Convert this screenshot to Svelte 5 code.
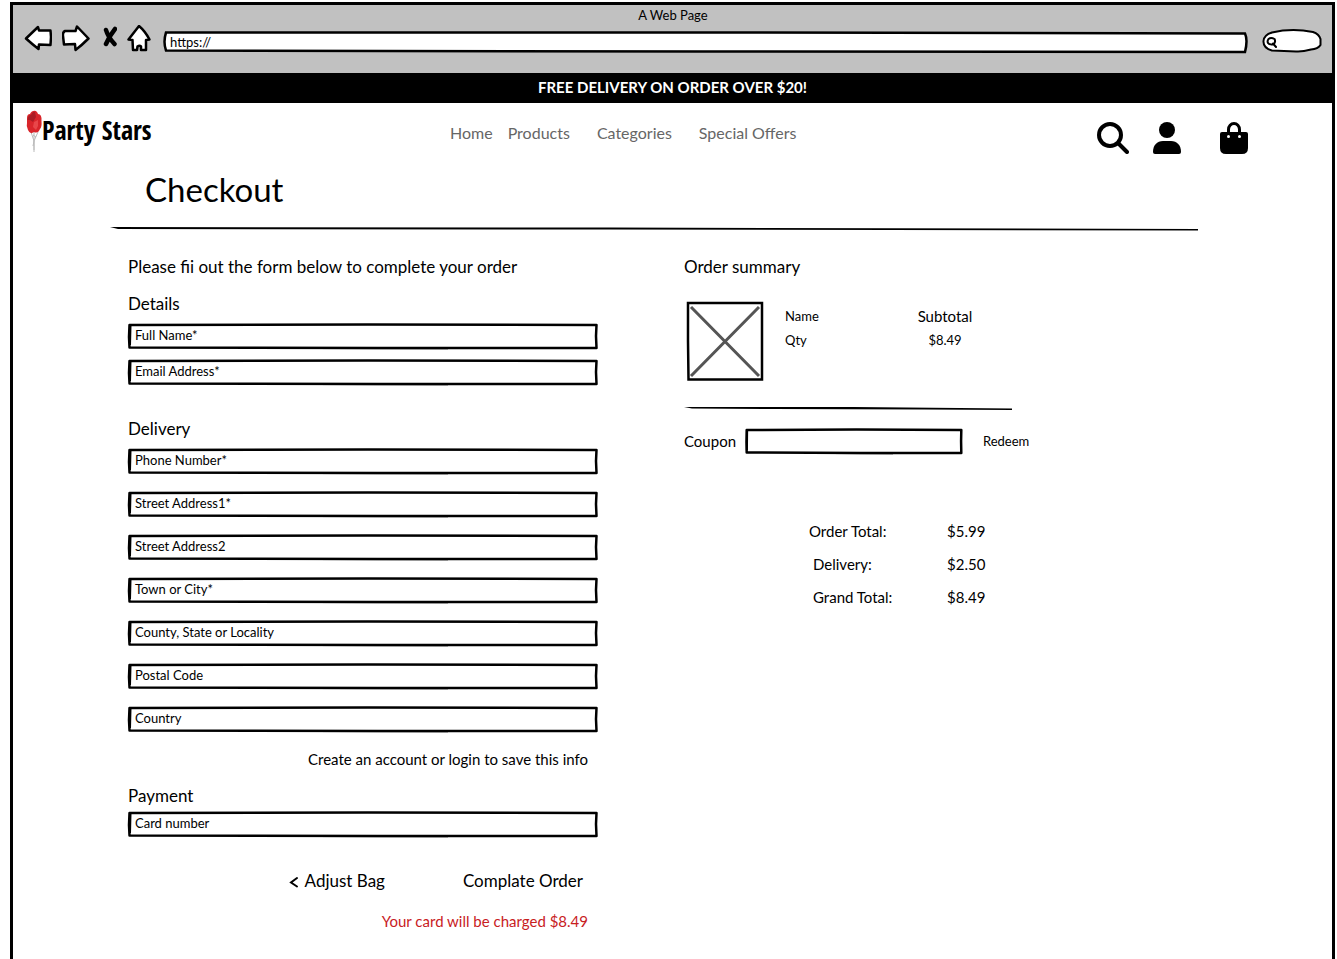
<script>
  const links = ['Home', 'Products', 'Categories', 'Special Offers'];
  const sections = [
    {
      title: 'Details',
      kind: 'details',
      fields: [
        { id: 'full-name', label: 'Full Name*' },
        { id: 'email', label: 'Email Address*' }
      ]
    },
    {
      title: 'Delivery',
      kind: 'delivery',
      fields: [
        { id: 'phone', label: 'Phone Number*' },
        { id: 'street-1', label: 'Street Address1*' },
        { id: 'street-2', label: 'Street Address2' },
        { id: 'town', label: 'Town or City*' },
        { id: 'county', label: 'County, State or Locality' },
        { id: 'postcode', label: 'Postal Code' },
        { id: 'country', label: 'Country' }
      ]
    }
  ];
  const totals = [
    ['Order Total:', '$5.99'],
    ['Delivery:', '$2.50'],
    ['Grand Total:', '$8.49']
  ];
</script>

{#snippet frame()}
  <svg class="frame" viewBox="0 0 470 26" preserveAspectRatio="none" aria-hidden="true">
    <path d="M1.500 2 L1 14 L1.500 24.500 L250 25 L468.500 25 L468 13 L468.500 2 L240 1.500Z" fill="none" stroke="#000" stroke-width="2.500" stroke-linejoin="round" vector-effect="non-scaling-stroke" />
    <path d="M2.500 3 L2 22 M180 25 L320 25.300" fill="none" stroke="#000" stroke-width="2" vector-effect="non-scaling-stroke" />
  </svg>
{/snippet}

{#snippet field(f)}
  <div class="field">
    {@render frame()}
    <div class="field-body">
      <label for={f.id}>{f.label}</label>
      <input id={f.id} type="text" />
    </div>
  </div>
{/snippet}

<div class="browser">
  <div class="chrome">
    <div class="title">A Web Page</div>
    <div class="toolbar">
      <button aria-label="Back">
        <svg width="28" height="28" viewBox="0 0 28 28"><path d="M2 13.500 L14 2 L15 5.500 L26.500 5.500 L27 12 L26.500 20 L15 19.500 L14.500 24 Q8 19 2 13.500Z" class="ink" /></svg>
      </button>
      <button aria-label="Forward">
        <svg width="28" height="28" viewBox="0 0 28 28"><path d="M26.500 13.500 L15 1.500 L13.500 6 L3 6 Q0.500 7 1 11 L2 19.500 L13 19 L13.500 25 Q20 20 26.500 13.500Z" class="ink" /></svg>
      </button>
      <button aria-label="Stop">
        <svg width="17" height="28" viewBox="0 0 17 28"><path d="M6 5 Q8 12 14.500 19 M15 4 Q10 10 6 19" fill="none" stroke="#000" stroke-width="4.500" stroke-linecap="round" /></svg>
      </button>
      <button aria-label="Home page">
        <svg width="24" height="28" viewBox="0 0 24 28"><path d="M12 1 L1.500 14.500 L5.500 15 L6 25 L10 25 L10.500 21.500 Q12.500 20 14 21.500 L14 25 L19 25 L19 15 L22.500 14.500 Q18 6 12 1Z" class="ink" /></svg>
      </button>
      <div class="address">
        <svg class="frame" viewBox="0 0 1085 22" preserveAspectRatio="none" aria-hidden="true">
          <path d="M3 1.500 L540 1.500 L1082 2.500 Q1085 9 1082 21 L540 20.500 L3 19.500 Q0 11 3 1.500Z" fill="#fff" stroke="#000" stroke-width="2.500" vector-effect="non-scaling-stroke" />
        </svg>
        <input type="text" value="https://" aria-label="Address" />
      </div>
      <button aria-label="Find">
        <svg width="60" height="24" viewBox="0 0 60 24">
          <path d="M10 3.500 Q30 -1 51 3 Q57 5 58.500 10 L58.500 16 Q56 20 49 20.500 Q40 23 34 22.500 L10 21.500 Q1 19 1.500 12 Q2 6 10 3.500Z" class="ink thin" />
          <path d="M6.500 10 Q9 8 12.500 10 Q14 13 11.500 15.500 Q7 16 6 14 Q5 12 6.500 10Z M11 14.500 L14 18" fill="none" stroke="#000" stroke-width="2" stroke-linecap="round" />
        </svg>
      </button>
    </div>
  </div>

  <p class="banner">FREE DELIVERY ON ORDER OVER $20!</p>

  <header>
    <a class="logo" href="#home">
      <svg width="16" height="44" viewBox="0 0 16 44" aria-hidden="true">
        <path d="M5 22 L8 31 L8 42 M12 22 L8 31 L7 36 M8 22 L8 40 M7 25 L10 27" fill="none" stroke="#bbb" stroke-width="1" />
        <path d="M1 8 Q1 4 4 4 Q6 0 10 1 Q12 3 12 4 Q16 4 15.500 11 Q16 17 14 19 Q12 24 8 22 Q4 25 2 20 Q0 16 1 13Z" fill="#d9252b" />
        <path d="M1.500 10 Q2 5 5 5 Q7 1 9 2 L10 7 L7 12 L4 10Z" fill="#ab1c24" />
        <path d="M8 12 L12 10 L12 16 L10 20 L7 17Z" fill="#e8474a" />
      </svg>
      <span>Party Stars</span>
    </a>
    <nav>
      {#each links as link}
        <a href="#{link.toLowerCase().replace(' ', '-')}">{link}</a>
      {/each}
    </nav>
    <div class="tools">
      <button aria-label="Search">
        <svg width="32" height="32" viewBox="0 0 32 32"><circle cx="13" cy="13" r="11" fill="none" stroke="#000" stroke-width="4" /><path d="M21.500 21.500 L30 30" stroke="#000" stroke-width="4" stroke-linecap="round" /></svg>
      </button>
      <button aria-label="Account">
        <svg width="28" height="32" viewBox="0 0 28 32"><circle cx="14" cy="8" r="8" /><path d="M0 30 C0 23 4 19 10 19 H18 C24 19 28 23 28 30 Q28 32 26 32 H2 Q0 32 0 30Z" /></svg>
      </button>
      <button class="bag" aria-label="Bag">
        <svg width="28" height="32" viewBox="0 0 28 32"><path d="M8.500 13 V7.500 A5.500 6 0 0 1 19.500 7.500 V13" fill="none" stroke="#000" stroke-width="3" /><path d="M2 10 H26 Q28 10 28 12 V26 Q28 32 22 32 H6 Q0 32 0 26 V12 Q0 10 2 10Z" /><circle cx="8.500" cy="14.500" r="1.500" fill="#fff" /><circle cx="19.500" cy="14.500" r="1.500" fill="#fff" /></svg>
      </button>
    </div>
  </header>

  <main>
    <h1>Checkout</h1>
    <svg class="rule" viewBox="0 0 1088 5" preserveAspectRatio="none" aria-hidden="true"><path d="M0 1 L500 1.500 L1088 3 L1088 4.500 L500 3.500 L8 3Z" /></svg>

    <div class="columns">
      <form onsubmit={(e) => e.preventDefault()}>
        <p>Please fii out the form below to complete your order</p>
        {#each sections as section}
          <section class={section.kind}>
            <h2>{section.title}</h2>
            <div class="fields">
              {#each section.fields as f}
                {@render field(f)}
              {/each}
            </div>
          </section>
        {/each}
        <a class="account" href="#login">Create an account or login to save this info</a>
        <section class="payment">
          <h2>Payment</h2>
          {@render field({ id: 'card', label: 'Card number' })}
        </section>
        <div class="actions">
          <button type="button">
            <svg width="10" height="14" viewBox="0 0 10 14" aria-hidden="true"><path d="M8 4 L2 8.500 L8 12.500" fill="none" stroke="#000" stroke-width="2" stroke-linecap="round" /></svg>
            Adjust Bag
          </button>
          <button type="submit">Complate Order</button>
        </div>
        <p class="charge">Your card will be charged $8.49</p>
      </form>

      <aside>
        <h2>Order summary</h2>
        <div class="product">
          <svg width="78" height="80" viewBox="0 0 78 80" aria-hidden="true">
            <path d="M5 6 L73 75 M73 6 L5 75" stroke="#555" stroke-width="3" />
            <path d="M2 2 H76 V78.500 H2.500 L2 40Z" fill="none" stroke="#000" stroke-width="2.500" />
          </svg>
          <div class="item"><span>Name</span><span>Qty</span></div>
          <div class="price"><span>Subtotal</span><small>$8.49</small></div>
        </div>
        <svg class="rule short" viewBox="0 0 328 5" preserveAspectRatio="none" aria-hidden="true"><path d="M0 1 L170 1 L328 2.500 L328 4 L240 3.500 L90 3 L8 2.500Z" /></svg>
        <div class="coupon">
          <label for="coupon">Coupon</label>
          <div class="field">
            {@render frame()}
            <div class="field-body"><input id="coupon" type="text" /></div>
          </div>
          <button type="button">Redeem</button>
        </div>
        <dl>
          {#each totals as [name, value]}
            <div><dt>{name}</dt><dd>{value}</dd></div>
          {/each}
        </dl>
      </aside>
    </div>
  </main>
</div>

<style>
  :global(body) {
    background: #fff;
  }
  .browser {
    box-sizing: border-box;
    min-height: calc(100vh - 2px);
    margin: 2px 2px 0 10px;
    border: 3px solid #000;
    border-bottom: 0;
    color: #000;
    font-family: Lato, 'Open Sans', sans-serif;
    font-size: 17px;
    line-height: 24px;
  }
  p, h1, h2, dl, dd {
    margin: 0;
  }
  h1, h2 {
    font-weight: 400;
  }
  h2 {
    font-size: 17px;
  }
  a {
    color: inherit;
    text-decoration: none;
  }
  button, input {
    padding: 0;
    border: 0;
    outline: 0;
    background: none;
    color: inherit;
    font: inherit;
  }
  button {
    cursor: pointer;
  }
  svg {
    display: block;
  }

  .chrome {
    padding: 0 10px 20px 11px;
    background: #c1c1c1;
  }
  .title {
    font-size: 13px;
    line-height: 20px;
    text-align: center;
  }
  .toolbar {
    display: flex;
    align-items: flex-start;
    gap: 10px;
  }
  .ink {
    fill: #fff;
    stroke: #000;
    stroke-width: 2.5px;
    stroke-linejoin: round;
  }
  .thin {
    stroke-width: 2px;
  }
  .address {
    display: grid;
    flex: 1;
    align-self: flex-end;
    grid-template-rows: 22px;
    margin: 0 4px 0 2px;
  }
  .address input {
    grid-area: 1 / 1;
    min-width: 0;
    padding: 0 7px;
    font-size: 13px;
    line-height: 20px;
  }
  .toolbar button:last-child {
    align-self: flex-end;
  }
  .frame {
    grid-area: 1 / 1;
    width: 100%;
    height: 100%;
    overflow: visible;
  }

  .banner {
    margin: 0 -3px;
    padding: 2px 0 4px;
    background: #000;
    color: #fff;
    font-size: 15px;
    font-weight: 700;
    text-align: center;
  }

  header {
    display: flex;
    align-items: flex-start;
    padding: 7px 84px 0 13px;
  }
  .logo {
    display: flex;
    width: 126px;
  }
  .logo svg {
    flex: none;
  }
  .logo span {
    font-family: 'Open Sans Condensed', 'Roboto Condensed', Lato, sans-serif;
    font-size: 26px;
    font-weight: 700;
    line-height: 40px;
    white-space: nowrap;
  }
  nav {
    display: flex;
    gap: 27px;
    margin-left: 298px;
    padding-top: 11px;
    color: #666;
    font-size: 16px;
  }
  nav a:first-child {
    margin-right: -12px;
  }
  .tools {
    display: flex;
    gap: 24px;
    margin-left: auto;
    padding-top: 12px;
  }
  .bag {
    margin-left: 15px;
  }

  main {
    padding: 15px 134px 24px 97px;
  }
  h1 {
    padding-left: 35px;
    font-size: 33px;
    line-height: 40px;
  }
  .rule {
    width: 100%;
    height: 5px;
    margin-top: 17px;
  }
  .columns {
    display: grid;
    grid-template-columns: 470fr 514fr;
    gap: 86px;
    padding: 24px 0 0 18px;
  }
  form {
    display: flex;
    flex-direction: column;
  }
  .details {
    margin-top: 13px;
  }
  .delivery {
    margin-top: 32px;
  }
  .fields {
    display: grid;
    gap: 17px;
    margin-top: 7px;
  }
  .details .fields {
    gap: 10px;
  }
  .field {
    display: grid;
    grid-template-rows: 26px;
  }
  .field-body {
    display: flex;
    grid-area: 1 / 1;
    align-items: center;
    gap: 6px;
    z-index: 1;
    padding: 0 7px 2px;
    font-size: 13px;
  }
  .field-body input {
    flex: 1;
    min-width: 0;
  }
  .account {
    align-self: flex-end;
    margin: 15px 10px 0 0;
    font-size: 15px;
  }
  .payment {
    margin-top: 13px;
  }
  .payment h2 {
    margin-bottom: 3px;
  }
  .actions {
    display: flex;
    justify-content: flex-end;
    gap: 78px;
    margin: 32px 15px 0 0;
  }
  .actions button {
    display: flex;
    align-items: center;
    gap: 6px;
  }
  .charge {
    align-self: flex-end;
    margin: 16px 10px 0 0;
    color: #c8201e;
    font-size: 15px;
  }

  .product {
    display: flex;
    margin: 22px 0 0 2px;
  }
  .item, .price {
    display: flex;
    flex-direction: column;
    padding-top: 3px;
  }
  .item {
    width: 112px;
    margin-left: 21px;
    font-size: 13px;
  }
  .price {
    align-items: center;
    width: 96px;
    font-size: 15px;
  }
  small {
    font-size: 13px;
  }
  .short {
    width: 328px;
    max-width: 100%;
    margin-top: 25px;
  }
  .coupon {
    display: grid;
    grid-template-columns: 52px 216px auto;
    align-items: center;
    justify-content: start;
    column-gap: 10px;
    margin-top: 17px;
    font-size: 15px;
  }
  .coupon button {
    margin-left: 11px;
    font-size: 13px;
  }
  dl {
    display: grid;
    gap: 9px;
    margin: 65px 0 0 129px;
    font-size: 15px;
  }
  dl div {
    display: grid;
    grid-template-columns: 134px auto;
    justify-content: start;
  }
  dl div:first-child {
    margin-left: -4px;
    grid-template-columns: 138px auto;
  }
</style>
